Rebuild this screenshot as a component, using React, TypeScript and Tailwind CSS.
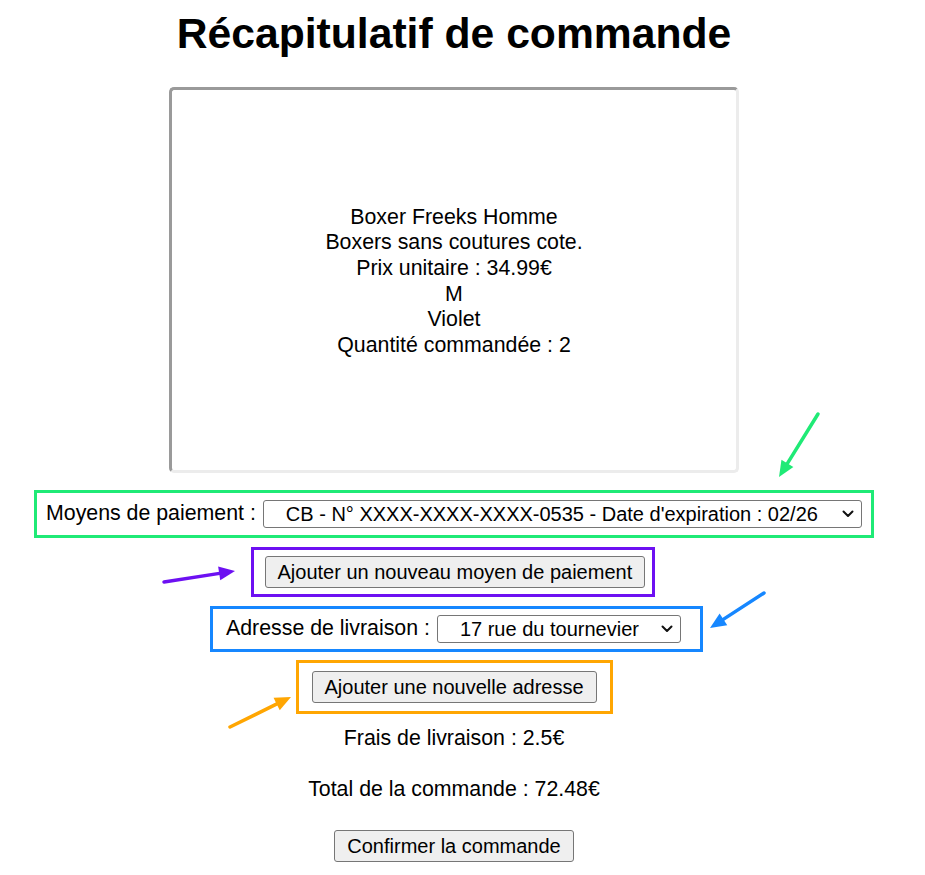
import React from 'react';

type ArrowProps = { x1: number; y1: number; x2: number; y2: number; color: string };

// Annotation arrow: shaft plus a filled head at (x2, y2)
const Arrow: React.FC<ArrowProps> = ({ x1, y1, x2, y2, color }) => {
  const dx = x2 - x1;
  const dy = y2 - y1;
  const len = Math.sqrt(dx * dx + dy * dy);
  const ux = dx / len;
  const uy = dy / len;
  const headLen = 16;
  const headW = 7;
  const bx = x2 - ux * headLen;
  const by = y2 - uy * headLen;
  const p1 = `${bx - uy * headW},${by + ux * headW}`;
  const p2 = `${bx + uy * headW},${by - ux * headW}`;
  return (
    <g>
      <line x1={x1} y1={y1} x2={bx + ux * 2} y2={by + uy * 2} stroke={color} strokeWidth={3.5} strokeLinecap="round" />
      <polygon points={`${x2},${y2} ${p1} ${p2}`} fill={color} />
    </g>
  );
};

const Chevron: React.FC = () => (
  <svg width="12" height="8" viewBox="0 0 12 8" className="shrink-0">
    <path d="M1.5 1.5 L6 6 L10.5 1.5" fill="none" stroke="#111" strokeWidth="2" strokeLinecap="round" strokeLinejoin="round" />
  </svg>
);

const FakeSelect: React.FC<{ value: string; width: string }> = ({ value, width }) => (
  <div
    className={`${width} h-[28px] flex items-center justify-between pl-[22px] pr-[7px] bg-white border border-[#767676] rounded-[3px] text-[20px] leading-none`}
  >
    <span className="whitespace-nowrap">{value}</span>
    <Chevron />
  </div>
);

const Button: React.FC<{ children: React.ReactNode }> = ({ children }) => (
  <button className="h-[32px] px-[12px] bg-[#efefef] border border-[#767676] rounded-[3px] text-[20px] leading-none text-black whitespace-nowrap">
    {children}
  </button>
);

export default function App() {
  return (
    <div
      className="relative w-[908px] h-[875px] bg-white text-black flex flex-col items-center"
      style={{ fontFamily: '"Liberation Sans", Arial, sans-serif' }}
    >
      <h1 className="mt-[9px] text-[42.67px] font-bold leading-[49px]">Récapitulatif de commande</h1>

      {/* Carte produit */}
      <div className="mt-[29px] w-[570px] h-[386px] pt-[3px] border-[3px] border-t-[#9a9a9a] border-l-[#9a9a9a] border-r-[#ececec] border-b-[#ececec] rounded-[5px] flex flex-col items-center justify-center text-[21.33px] leading-[25.6px] text-center">
        <div>Boxer Freeks Homme</div>
        <div>Boxers sans coutures cote.</div>
        <div>Prix unitaire : 34.99€</div>
        <div>M</div>
        <div>Violet</div>
        <div>Quantité commandée : 2</div>
      </div>

      {/* Moyens de paiement */}
      <div className="mt-[17px] w-[840px] h-[48px] border-[3px] border-[#1fea76] flex items-center pl-[9px] text-[21.33px]">
        <span className="whitespace-nowrap">Moyens de paiement :</span>
        <div className="ml-[7px]">
          <FakeSelect value="CB - N° XXXX-XXXX-XXXX-0535 - Date d'expiration : 02/26" width="w-[599px]" />
        </div>
      </div>

      <div className="mt-[9px] mr-[3px] w-[404px] h-[50px] border-[3px] border-[#6d10f2] flex items-center pl-[11px]">
        <Button>Ajouter un nouveau moyen de paiement</Button>
      </div>

      {/* Adresse */}
      <div className="mt-[9px] ml-[5px] w-[493px] h-[46px] border-[3px] border-[#1687ff] flex items-center pl-[13px] text-[21.33px]">
        <span className="whitespace-nowrap">Adresse de livraison :</span>
        <div className="ml-[7px]">
          <FakeSelect value="17 rue du tournevier" width="w-[244px]" />
        </div>
      </div>

      <div className="mt-[8px] w-[317px] h-[54px] border-[3px] border-[#ffa602] flex items-center pl-[13px]">
        <Button>Ajouter une nouvelle adresse</Button>
      </div>

      <p className="mt-[12px] text-[21.33px] leading-[25px]">Frais de livraison : 2.5€</p>
      <p className="mt-[26px] text-[21.33px] leading-[25px]">Total de la commande : 72.48€</p>
      <div className="mt-[28px]">
        <Button>Confirmer la commande</Button>
      </div>

      {/* Flèches d'annotation */}
      <svg className="absolute inset-0 pointer-events-none" width="925" height="875">
        <Arrow x1={818} y1={414} x2={779} y2={477} color="#1fea76" />
        <Arrow x1={164} y1={582} x2={235} y2={571} color="#6d10f2" />
        <Arrow x1={764} y1={593} x2={710} y2={628} color="#1687ff" />
        <Arrow x1={230} y1={727} x2={291} y2={697} color="#ffa602" />
      </svg>
    </div>
  );
}
